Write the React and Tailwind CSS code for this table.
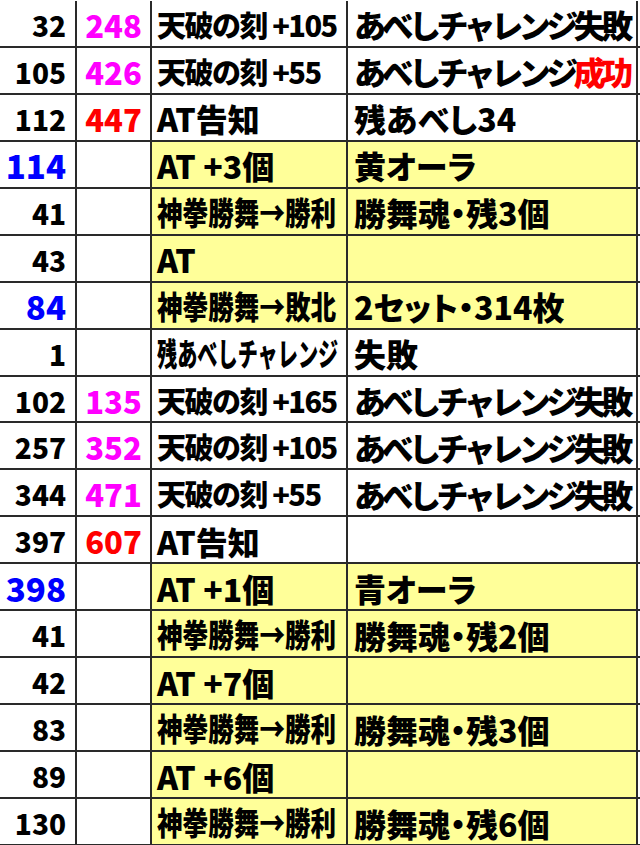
import React from "react";

const M = "text-[#ff00ff]";
const R = "text-[#ff0000]";
const B = "text-[#0000ff]";

const rows = [
  { a: "32", b: "248", bc: M, c: "天破の刻 +105", ct: true, d: "あべしチャレンジ失敗", ds: true },
  { a: "105", b: "426", bc: M, c: "天破の刻 +55", ct: true, d: "success", ds: true },
  { a: "112", b: "447", bc: R, c: "AT告知", d: "残あべし34" },
  { a: "114", ac: B, c: "AT +3個", d: "黄オーラ", y: true },
  { a: "41", c: "神拳勝舞→勝利", cs: "scale-x-[0.8]", d: "勝舞魂・残3個", y: true },
  { a: "43", c: "AT", d: "", y: true },
  { a: "84", ac: B, c: "神拳勝舞→敗北", cs: "scale-x-[0.8]", d: "2セット・314枚", y: true },
  { a: "1", c: "残あべしチャレンジ", cs: "scale-x-[0.63]", d: "失敗" },
  { a: "102", b: "135", bc: M, c: "天破の刻 +165", ct: true, d: "あべしチャレンジ失敗", ds: true },
  { a: "257", b: "352", bc: M, c: "天破の刻 +105", ct: true, d: "あべしチャレンジ失敗", ds: true },
  { a: "344", b: "471", bc: M, c: "天破の刻 +55", ct: true, d: "あべしチャレンジ失敗", ds: true },
  { a: "397", b: "607", bc: R, c: "AT告知", d: "" },
  { a: "398", ac: B, c: "AT +1個", d: "青オーラ", y: true },
  { a: "41", c: "神拳勝舞→勝利", cs: "scale-x-[0.8]", d: "勝舞魂・残2個", y: true },
  { a: "42", c: "AT +7個", d: "", y: true },
  { a: "83", c: "神拳勝舞→勝利", cs: "scale-x-[0.8]", d: "勝舞魂・残3個", y: true },
  { a: "89", c: "AT +6個", d: "", y: true },
  { a: "130", c: "神拳勝舞→勝利", cs: "scale-x-[0.8]", d: "勝舞魂・残6個", y: true },
];

function Row({ r }) {
  const bg = r.y ? "bg-[#ffff99]" : "bg-white";
  return (
    <div className="grid grid-cols-[77px_75px_196px_290px] border-b-2 border-[#2a2a2a] min-h-0">
      <div className="flex items-center justify-end pr-[9px] pt-[3px] border-r-2 border-[#2a2a2a] bg-white overflow-hidden">
        {r.ac ? (
          <span className={`${r.ac} text-[33px] leading-none`}>{r.a}</span>
        ) : (
          <span className="text-[28px] leading-none text-black">{r.a}</span>
        )}
      </div>
      <div className="flex items-center justify-center pt-[2px] border-r-2 border-[#2a2a2a] bg-white overflow-hidden">
        {r.b && <span className={`${r.bc} text-[31px] leading-none`}>{r.b}</span>}
      </div>
      <div className={`flex items-center pl-[5px] pt-[2px] border-r-2 border-[#2a2a2a] ${bg} overflow-hidden`}>
        {r.cs ? (
          <div className="w-[186px] overflow-visible">
            <span className={`inline-block origin-left ${r.cs} whitespace-nowrap text-[32px] leading-none text-black`}>{r.c}</span>
          </div>
        ) : r.ct ? (
          <span className="whitespace-nowrap text-[29px] tracking-[-1.5px] leading-none text-black">{r.c}</span>
        ) : (
          <span className="whitespace-nowrap text-[32px] leading-none text-black">{r.c}</span>
        )}
      </div>
      <div className={`flex items-center pl-[6px] pt-[2px] border-r-2 border-[#2a2a2a] ${bg} overflow-hidden`}>
        {r.d === "success" ? (
          <span className="whitespace-nowrap text-[32px] tracking-[-4.5px] leading-none text-black">
            あべしチャレンジ<span className="text-[#ff0000]">成功</span>
          </span>
        ) : r.ds ? (
          <span className="whitespace-nowrap text-[32px] tracking-[-4.5px] leading-none text-black">{r.d}</span>
        ) : (
          <span className="whitespace-nowrap text-[32px] leading-none text-black [font-feature-settings:'palt']">{r.d}</span>
        )}
      </div>
    </div>
  );
}

export default function App() {
  return (
    <div className="w-[640px] h-[845px] overflow-hidden bg-white font-['Noto_Sans_CJK_JP',sans-serif] font-black">
      <div className="mt-[1px] h-[845px] w-[640px] grid grid-rows-[repeat(18,minmax(0,1fr))]">
        {rows.map((r, i) => (
          <Row key={i} r={r} />
        ))}
      </div>
    </div>
  );
}
